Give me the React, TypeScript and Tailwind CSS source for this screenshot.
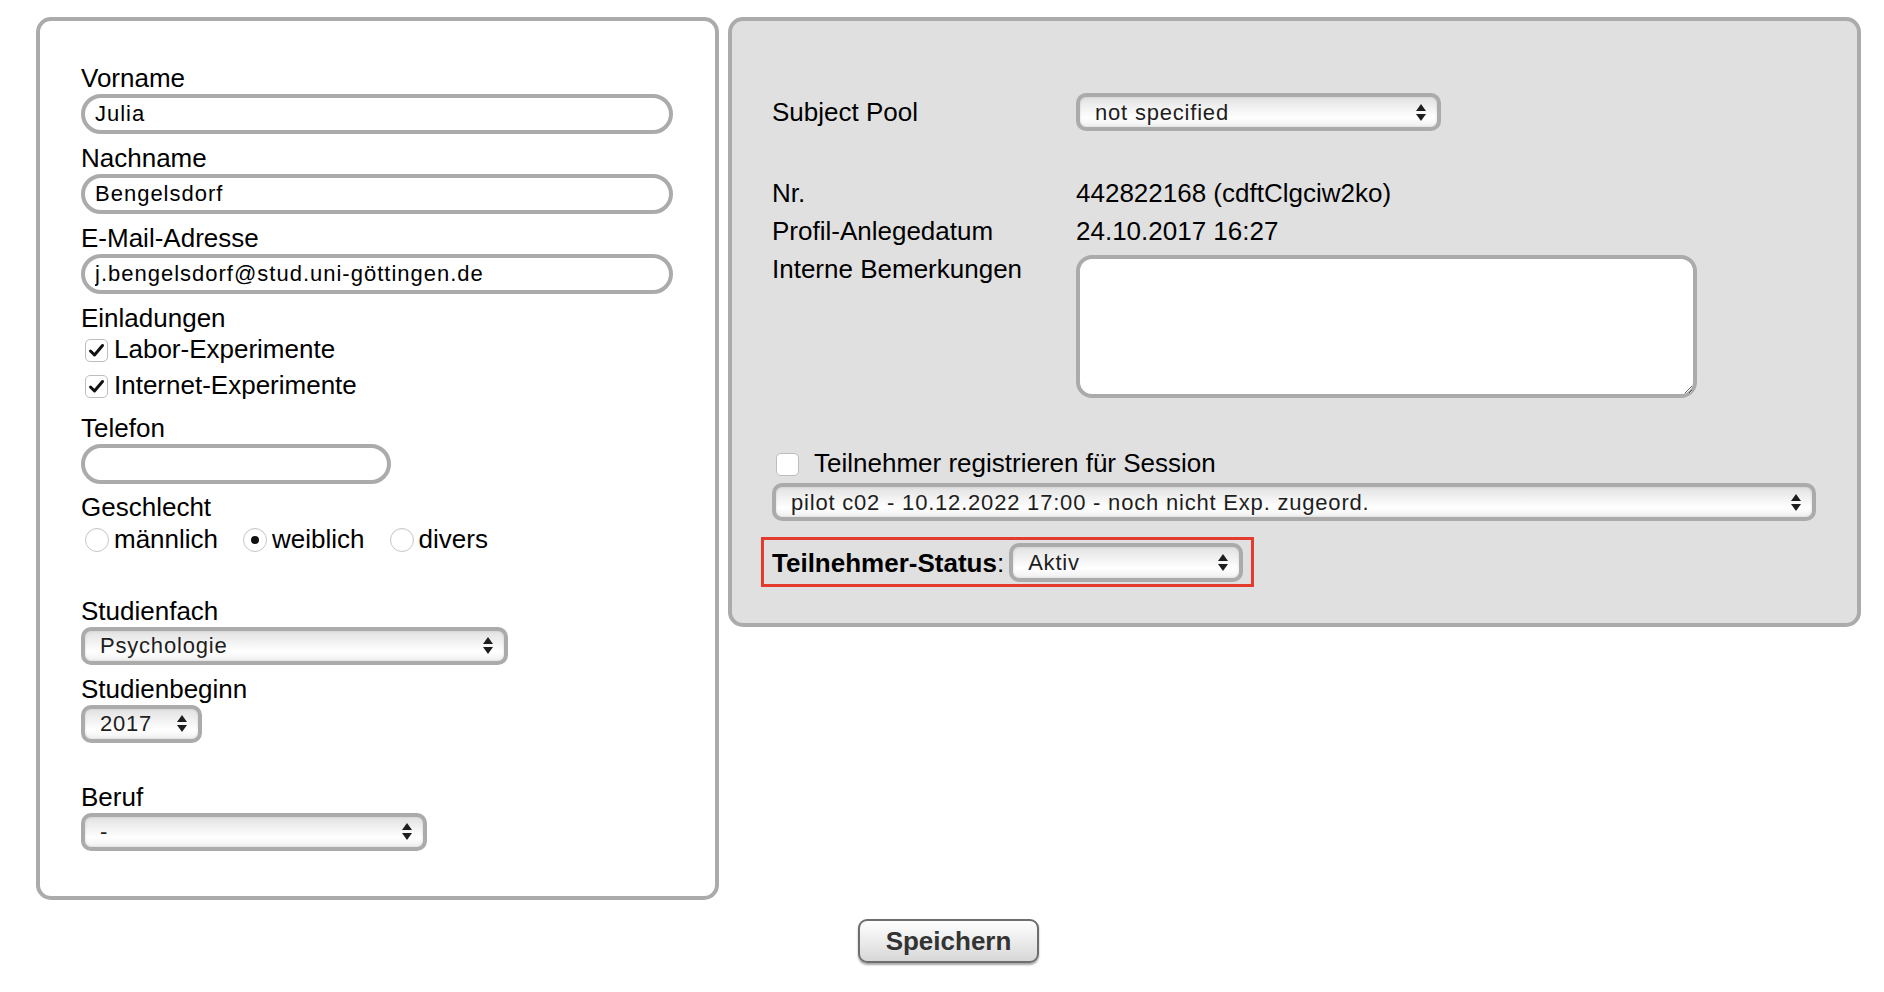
import React from "react";

const Arrows = () => (
  <svg width="10" height="17" viewBox="0 0 10 17" className="shrink-0">
    <path d="M0 7 L5 0 L10 7 Z" fill="#1e1e1e" />
    <path d="M0 10 L10 10 L5 17 Z" fill="#1e1e1e" />
  </svg>
);

function Select({ value, className = "" }: { value: string; className?: string }) {
  return (
    <div
      className={
        "flex shrink-0 items-center justify-between rounded-[10px] border-4 border-[#ababab] bg-[linear-gradient(180deg,#e2e2e2_0%,#f3f3f3_40%,#ffffff_68%,#f0f0f0_100%)] pl-[15px] pr-[11px] text-[22px] leading-none tracking-[0.8px] text-[#1e1e1e] shadow-[inset_0_0_3px_rgba(0,0,0,0.12)] " +
        className
      }
    >
      <span className="whitespace-nowrap pt-[1px]">{value}</span>
      <Arrows />
    </div>
  );
}

function TextInput({ value, className = "" }: { value: string; className?: string }) {
  return (
    <input
      readOnly
      value={value}
      className={
        "block h-[40px] rounded-full border-4 border-[#ababab] bg-white px-[10px] text-[22px] tracking-[1px] text-black outline-none " +
        className
      }
    />
  );
}

function Label({ children, className = "" }: { children: React.ReactNode; className?: string }) {
  return (
    <div className={"h-[33px] whitespace-nowrap pt-[2px] text-[26px] leading-[30px] " + className}>{children}</div>
  );
}

function CheckBox({ checked, className = "" }: { checked?: boolean; className?: string }) {
  return (
    <span
      className={
        "flex h-[23px] w-[23px] shrink-0 items-center justify-center rounded-[5px] border border-[#bdbdbd] bg-white " +
        className
      }
    >
      {checked && (
        <svg width="17" height="15" viewBox="0 0 17 15">
          <path
            d="M2.5 8 L6.5 12 L14.5 2.5"
            stroke="#111"
            strokeWidth="3"
            fill="none"
            strokeLinecap="round"
            strokeLinejoin="round"
          />
        </svg>
      )}
    </span>
  );
}

function Radio({ checked, className = "" }: { checked?: boolean; className?: string }) {
  return (
    <span
      className={
        "flex h-[24px] w-[24px] shrink-0 items-center justify-center rounded-full border border-[#c6c6c6] bg-white shadow-[inset_0_1px_1px_rgba(0,0,0,0.04)] " +
        className
      }
    >
      {checked && <span className="h-[8px] w-[8px] rounded-full bg-[#111]" />}
    </span>
  );
}

function LeftPanel() {
  return (
    <div className="h-[883px] w-[683px] shrink-0 rounded-[15px] border-4 border-[#ababab] bg-white pl-[41px] pt-[39.5px]">
      <Label>Vorname</Label>
      <TextInput value="Julia" className="w-[592px]" />

      <Label className="mt-[7px]">Nachname</Label>
      <TextInput value="Bengelsdorf" className="w-[592px]" />

      <Label className="mt-[7px]">E-Mail-Adresse</Label>
      <TextInput value="j.bengelsdorf@stud.uni-göttingen.de" className="w-[592px]" />

      <div className="mt-[7px] h-[31px] pt-[2px] text-[26px] leading-[30px]">Einladungen</div>
      <div className="flex h-[36px] items-start">
        <CheckBox checked className="ml-[4px] mr-[6px] mt-[7px]" />
        <span className="pt-[2px] text-[26px] leading-[30px]">Labor-Experimente</span>
      </div>
      <div className="flex h-[36px] items-start">
        <CheckBox checked className="ml-[4px] mr-[6px] mt-[7px]" />
        <span className="pt-[2px] text-[26px] leading-[30px]">Internet-Experimente</span>
      </div>

      <Label className="mt-[7px]">Telefon</Label>
      <TextInput value="" className="w-[310px]" />

      <div className="mt-[6px] h-[32px] pt-[2px] text-[26px] leading-[30px]">Geschlecht</div>
      <div className="flex h-[30px] items-start text-[26px] leading-[30px]">
        <Radio className="ml-[4px] mr-[5px] mt-[6.5px]" />
        <span className="pt-[2px]">männlich</span>
        <Radio checked className="ml-[25px] mr-[5px] mt-[6.5px]" />
        <span className="pt-[2px]">weiblich</span>
        <Radio className="ml-[25px] mr-[5px] mt-[6.5px]" />
        <span className="pt-[2px]">divers</span>
      </div>

      <Label className="mt-[42px]">Studienfach</Label>
      <Select value="Psychologie" className="h-[38px] w-[427px]" />

      <Label className="mt-[7px]">Studienbeginn</Label>
      <Select value="2017" className="h-[38px] w-[121px]" />

      <Label className="mt-[37px]">Beruf</Label>
      <Select value="-" className="h-[38px] w-[346px]" />
    </div>
  );
}

function RightPanel() {
  return (
    <div className="h-[610px] w-[1133px] shrink-0 rounded-[15px] border-4 border-[#ababab] bg-[#e0e0e0] pl-[40px] pt-[72px]">
      <div className="flex items-start">
        <div className="w-[304px] shrink-0 pt-[3.5px] text-[26px] leading-[30px]">Subject Pool</div>
        <Select value="not specified" className="h-[38px] w-[365px]" />
      </div>

      <div className="mt-[45px] flex h-[38px] items-start pt-[2px] text-[26px] leading-[30px]">
        <div className="w-[304px] shrink-0">Nr.</div>
        <div>442822168 (cdftClgciw2ko)</div>
      </div>
      <div className="flex h-[38px] items-start pt-[2px] text-[26px] leading-[30px]">
        <div className="w-[304px] shrink-0">Profil-Anlegedatum</div>
        <div>24.10.2017 16:27</div>
      </div>
      <div className="flex items-start text-[26px] leading-[30px]">
        <div className="w-[304px] shrink-0 pt-[2px]">Interne Bemerkungen</div>
        <textarea
          readOnly
          className="mt-[3px] block h-[143px] w-[621px] rounded-[16px] border-4 border-[#ababab] bg-white outline-none"
        />
      </div>

      <div className="mt-[48px] flex h-[30px] items-start text-[26px] leading-[30px]">
        <CheckBox className="ml-[4px] mr-[15px] mt-[7px] h-[22px] w-[22px]" />
        <span className="pt-[2px]">Teilnehmer registrieren für Session</span>
      </div>
      <Select
        value="pilot c02 - 10.12.2022 17:00 - noch nicht Exp. zugeord."
        className="mt-[7px] h-[38px] w-[1044px]"
      />

      <div className="-ml-[11px] mt-[16px] inline-flex items-center border-[3px] border-[#e33b2d] pb-[2px] pl-[8px] pr-[8px] pt-[3px]">
        <span className="whitespace-nowrap text-[26px] leading-[30px]">
          <span className="font-bold">Teilnehmer-Status</span>:
        </span>
        <Select value="Aktiv" className="ml-[5px] h-[39px] w-[234px]" />
      </div>
    </div>
  );
}

export default function App() {
  return (
    <div className="min-h-screen bg-white font-['Liberation_Sans',Arial,sans-serif] text-black">
      <div className="w-[1861px] pl-[36px] pt-[17px]">
        <div className="flex items-start gap-[9px]">
          <LeftPanel />
          <RightPanel />
        </div>
        <div className="mt-[19px] flex justify-center">
          <button
            type="button"
            className="h-[44px] w-[181px] rounded-[9px] border-2 border-[#6e6e6e] bg-[linear-gradient(180deg,#fefefe_0%,#ececec_50%,#d6d6d6_100%)] text-[26px] font-bold leading-none text-[#333] shadow-[0_2px_2px_rgba(0,0,0,0.35)]"
          >
            Speichern
          </button>
        </div>
      </div>
    </div>
  );
}
